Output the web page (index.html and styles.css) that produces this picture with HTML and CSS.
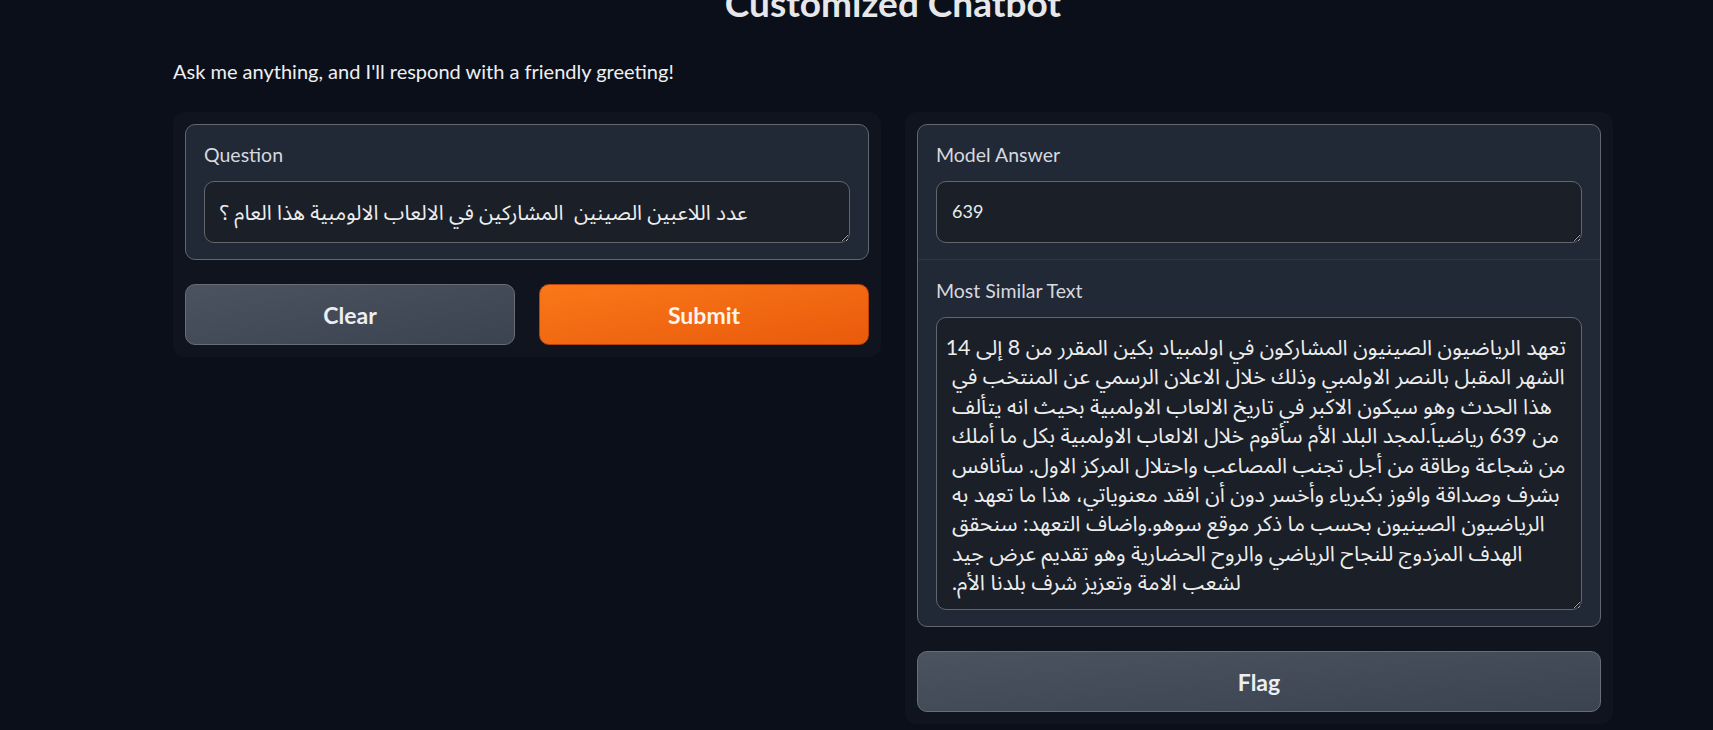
FILE: index.html
```html
<!DOCTYPE html>
<html lang="en">
<head>
<meta charset="utf-8">
<title>Customized Chatbot</title>
<link rel="stylesheet" href="styles.css">
</head>
<body>
<div class="page">
  <header class="intro">
    <h1 class="title">Customized Chatbot</h1>
    <p class="desc">Ask me anything, and I'll respond with a friendly greeting!</p>
  </header>
  <div class="columns">
    <section class="panel">
      <div class="block">
        <div class="field">
          <div class="label">Question</div>
          <div class="box box-short box-question"><div class="ln">عدد اللاعبين الصينين  المشاركين في الالعاب الالومبية هذا العام ؟</div></div>
        </div>
      </div>
      <div class="actions">
        <button class="btn btn-secondary">Clear</button>
        <button class="btn btn-primary">Submit</button>
      </div>
    </section>
    <section class="panel">
      <div class="block">
        <div class="field">
          <div class="label">Model Answer</div>
          <div class="box box-short box-num">639</div>
        </div>
        <div class="field field-divided">
          <div class="label">Most Similar Text</div>
          <div class="box box-long">
            <div class="ln">تعهد الرياضيون الصينيون المشاركون في اولمبياد بكين المقرر من 8 إلى 14</div>
            <div class="ln">الشهر المقبل بالنصر الاولمبي وذلك خلال الاعلان الرسمي عن المنتخب في</div>
            <div class="ln">هذا الحدث وهو سيكون الاكبر في تاريخ الالعاب الاولمبية بحيث انه يتألف</div>
            <div class="ln">من 639 رياضياَ.لمجد البلد الأم سأقوم خلال الالعاب الاولمبية بكل ما أملك</div>
            <div class="ln">من شجاعة وطاقة من أجل تجنب المصاعب واحتلال المركز الاول. سأنافس</div>
            <div class="ln">بشرف وصداقة وافوز بكبرياء وأخسر دون أن افقد معنوياتي، هذا ما تعهد به</div>
            <div class="ln">الرياضيون الصينيون بحسب ما ذكر موقع سوهو.واضاف التعهد: سنحقق</div>
            <div class="ln">الهدف المزدوج للنجاح الرياضي والروح الحضارية وهو تقديم عرض جيد</div>
            <div class="ln">لشعب الامة وتعزيز شرف بلدنا الأم.</div>
          </div>
        </div>
      </div>
      <button class="btn btn-secondary btn-full">Flag</button>
    </section>
  </div>
</div>
</body>
</html>
```

FILE: styles.css
```css
* { box-sizing: border-box; }

html, body {
  margin: 0;
  padding: 0;
  background: #0b0f19;
  height: 100%;
  overflow: hidden;
}

body {
  font-family: Lato, "Noto Sans", sans-serif;
  color: #e5e7eb;
}

.page {
  width: 1440px;
  margin-left: 173px;
}

.intro {
  display: flex;
  flex-direction: column;
}

.title {
  margin: -20px 0 0;
  font-size: 37px;
  line-height: 46px;
  font-weight: 700;
  text-align: center;
  color: #e5e7eb;
}

.desc {
  margin: 32px 0 0;
  font-size: 20px;
  line-height: 26px;
  color: #eef0f3;
}

.columns {
  margin-top: 28px;
  display: grid;
  grid-template-columns: 708px 708px;
  gap: 24px;
  align-items: start;
}

.panel {
  background: #10141f;
  border-radius: 12px;
  padding: 12px;
  display: flex;
  flex-direction: column;
  gap: 24px;
}

.block {
  background: #212836;
  border: 1px solid #62676f;
  border-radius: 10px;
  overflow: hidden;
}

.field {
  padding: 17px 18px 16px;
  display: flex;
  flex-direction: column;
}

.field-divided {
  border-top: 1px solid #2d3544;
  padding-top: 18px;
}

.label {
  font-size: 19.5px;
  line-height: 26px;
  margin-bottom: 13px;
  color: #d6d9de;
}

.box {
  background: #1b1f28;
  border: 1px solid #62676f;
  border-radius: 10px;
  padding: 15px 15px 0;
  color: #eceded;
  font-family: Lato, "Noto Sans Arabic", "Noto Naskh Arabic", "DejaVu Sans", sans-serif;
  font-size: 21.4px;
  line-height: 29.4px;
  white-space: pre;
  overflow: hidden;
  resize: vertical;
  color-scheme: dark;
  text-align: left;
}

.ln {
  direction: rtl;
  text-align: left;
  white-space: pre;
}

.box-short {
  height: 62px;
}

.box-question {
  font-size: 20.8px;
}

.box-num {
  font-size: 18px;
}

.box-long {
  height: 293px;
  white-space: normal;
}

.actions {
  display: grid;
  grid-template-columns: 1fr 1fr;
  gap: 24px;
}

.btn {
  height: 61px;
  border-radius: 10px;
  font-family: Lato, "Noto Sans", sans-serif;
  font-size: 23px;
  font-weight: 700;
  color: #eceef1;
  cursor: pointer;
}

.btn-secondary {
  background: linear-gradient(to bottom right, #4b5361, #3b4351);
  border: 1px solid #686d76;
}

.btn-primary {
  background: linear-gradient(to bottom right, #f97818, #ea5a0c);
  border: 1px solid #b8420c;
  color: #fff3ea;
}

.btn-full {
  width: 100%;
}
```
